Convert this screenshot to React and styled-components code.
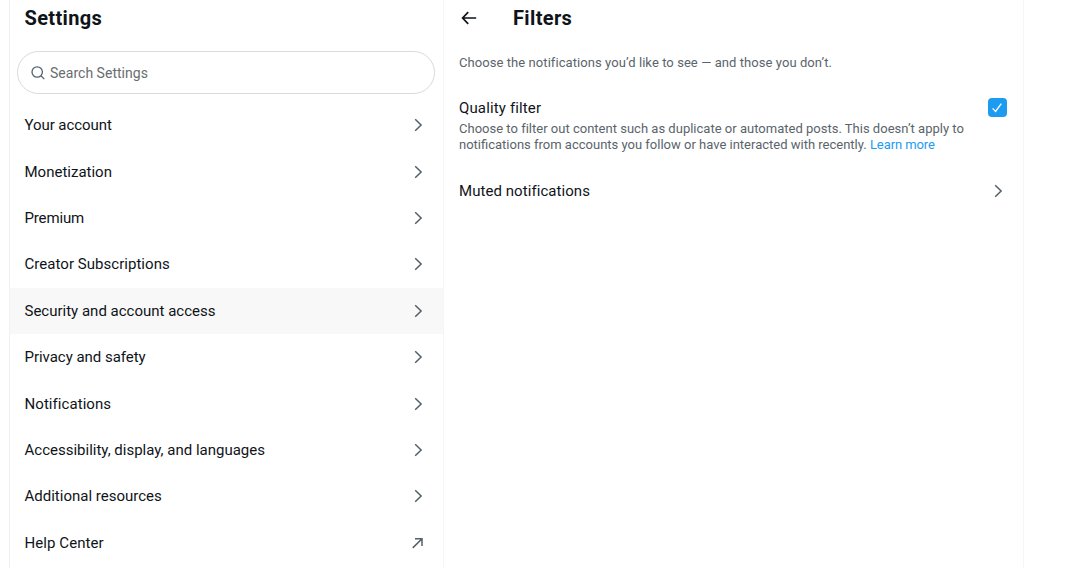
import React from "react";
import styled, { createGlobalStyle } from "styled-components";

const Global = createGlobalStyle`
  * { box-sizing: border-box; }
  html, body { margin: 0; background: #fff; overflow: hidden; }
  body { font-family: Roboto, "Liberation Sans", sans-serif; color: #0f1419; }
  h1, h2, p { margin: 0; }
`;

const Page = styled.div`
  display: flex;
  height: 568px;
  padding-left: 8.5px;
  overflow: hidden;
`;

const Sidebar = styled.nav`
  display: flex;
  flex-direction: column;
  width: 435px;
  border-left: 1px solid #eff1f2;
  border-right: 1px solid #f5f7f7;
`;

const Detail = styled.main`
  width: 580.5px;
  border-right: 1px solid #f3f5f6;
`;

const Header = styled.header`
  display: flex;
  align-items: center;
  height: 36px;
  padding-left: ${(p) => p.$indent}px;
`;

const Title = styled.h1`
  font-size: 20px;
  line-height: 24px;
  font-weight: 700;
  letter-spacing: 0.36px;
`;

const BackButton = styled.button`
  display: flex;
  width: 54px;
  padding: 0;
  border: 0;
  background: none;
  color: #0f1419;
`;

const SearchBox = styled.label`
  display: flex;
  flex-shrink: 0;
  align-items: center;
  gap: 4px;
  height: 43px;
  margin: 15px 8px 8px 7.5px;
  padding-left: 12px;
  border: 1px solid #d5dadd;
  border-radius: 22px;
  color: #536471;
`;

const Placeholder = styled.span`
  color: #696d70;
  font-size: 14px;
  letter-spacing: 0.02px;
`;

const Row = styled.div`
  display: flex;
  flex-shrink: 0;
  align-items: center;
  justify-content: space-between;
  height: 46.4px;
  padding: 0 17px 0 15px;
  background: ${(p) => (p.$active ? "#f8f8f8" : "transparent")};
  color: #536067;
`;

const Label = styled.span`
  color: #0f1419;
  font-size: 15px;
  line-height: 20px;
  letter-spacing: ${(p) => p.$spacing || 0}px;
  white-space: nowrap;
`;

const Text = styled.p`
  color: #5a646b;
  font-size: 13px;
  line-height: 16px;
  white-space: nowrap;
  letter-spacing: ${(p) => p.$spacing || 0}px;
`;

const Intro = styled.div`
  padding: 19px 15.5px 0;
`;

const Setting = styled.section`
  padding: 25px 16px 0 15.5px;
`;

const SettingHead = styled.div`
  display: flex;
  align-items: center;
  justify-content: space-between;
  height: 23px;
  margin-bottom: 2px;
`;

const Check = styled.span`
  display: flex;
  align-items: center;
  justify-content: center;
  width: 19.5px;
  height: 19.5px;
  border-radius: 4px;
  background: #1d9bf0;
  color: #fff;
`;

const Link = styled.a`
  color: #1d9bf0;
  letter-spacing: -0.08px;
`;

const MutedRow = styled(Row)`
  margin-top: 15px;
  padding-left: 15.5px;
`;

const Icon = styled.svg`
  display: block;
  flex-shrink: 0;
  fill: none;
  stroke: currentColor;
`;

const Chevron = () => (
  <Icon width="16" height="16" viewBox="0 0 16 16" strokeWidth="1.5">
    <path d="M5.2 2.2 11.1 8l-5.9 5.8" />
  </Icon>
);

const External = () => (
  <Icon width="16" height="16" viewBox="0 0 16 16" strokeWidth="1.5">
    <path d="M2.8 12.9 12 3.7M5 3.7h7v7.2" />
  </Icon>
);

const items = [
  ["Your account", -0.06],
  ["Monetization", 0],
  ["Premium", -0.15],
  ["Creator Subscriptions", 0.04],
  ["Security and account access", 0],
  ["Privacy and safety", -0.03],
  ["Notifications", 0.06],
  ["Accessibility, display, and languages", 0],
  ["Additional resources", 0],
  ["Help Center", 0.08],
];

export default function App() {
  return (
    <>
      <Global />
      <Page>
        <Sidebar>
          <Header $indent={15}>
            <Title>Settings</Title>
          </Header>
          <SearchBox>
            <Icon width="16" height="16" viewBox="0 0 16 16" strokeWidth="1.3">
              <circle cx="7.2" cy="7" r="5.2" />
              <path d="m11 10.8 3.3 3.3" />
            </Icon>
            <Placeholder>Search Settings</Placeholder>
          </SearchBox>
          {items.map(([name, spacing]) => (
            <Row key={name} $active={name.startsWith("Security")}>
              <Label $spacing={spacing}>{name}</Label>
              {name === "Help Center" ? <External /> : <Chevron />}
            </Row>
          ))}
        </Sidebar>
        <Detail>
          <Header $indent={15.5}>
            <BackButton aria-label="Back">
              <Icon width="20" height="18" viewBox="0 0 20 18" strokeWidth="1.7">
                <path d="M9.2 3.2 3.6 9l5.6 5.8M4 9h13.2" />
              </Icon>
            </BackButton>
            <Title>Filters</Title>
          </Header>
          <Intro>
            <Text $spacing={0.07}>Choose the notifications you’d like to see — and those you don’t.</Text>
          </Intro>
          <Setting>
            <SettingHead>
              <Label $spacing={0.14}>Quality filter</Label>
              <Check>
                <Icon width="14" height="14" viewBox="0 0 14 14" strokeWidth="1.3">
                  <path d="m2.6 7.4 3 3.1 5.7-7.8" />
                </Icon>
              </Check>
            </SettingHead>
            <Text $spacing={0.01}>Choose to filter out content such as duplicate or automated posts. This doesn’t apply to</Text>
            <Text>
              notifications from accounts you follow or have interacted with recently. <Link>Learn more</Link>
            </Text>
          </Setting>
          <MutedRow>
            <Label $spacing={0.06}>Muted notifications</Label>
            <Chevron />
          </MutedRow>
        </Detail>
      </Page>
    </>
  );
}
